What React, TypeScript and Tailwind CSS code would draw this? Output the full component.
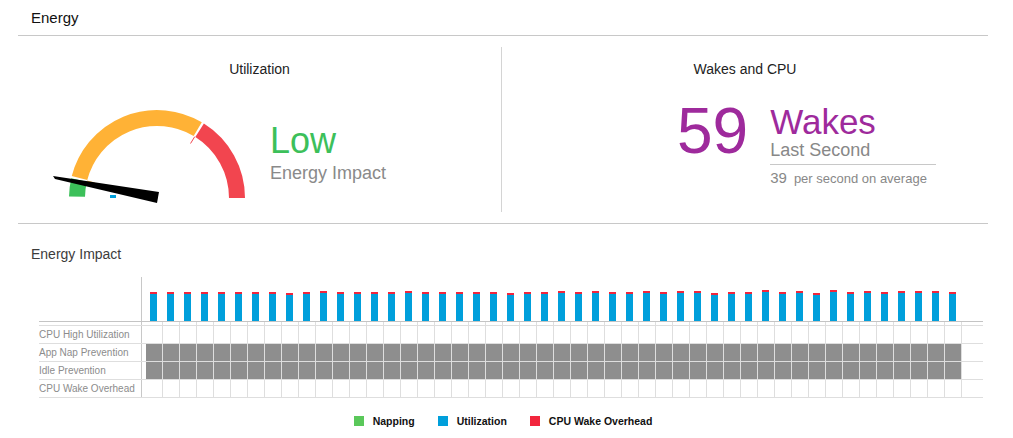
import React from 'react';

// bar levels read off the chart: N normal, L low, H high, X highest
const levels = 'NNNNNNNNLNHNNNNHNNNNNLNNHNHNNHNHHLNNXNHLXNHNHHHN'.split('');

const blueHeight: Record<string, string> = {
  L: 'h-[26px]',
  N: 'h-[27px]',
  H: 'h-[28px]',
  X: 'h-[29px]',
};

const rows = [
  { label: 'CPU High Utilization', filled: false },
  { label: 'App Nap Prevention', filled: true },
  { label: 'Idle Prevention', filled: true },
  { label: 'CPU Wake Overhead', filled: false },
];

const cx = 117;
const cy = 98;

const pt = (deg: number, r: number) => {
  const a = (deg * Math.PI) / 180;
  return [cx + r * Math.cos(a), cy - r * Math.sin(a)];
};

const arc = (from: number, to: number, r: number) => {
  const [x1, y1] = pt(to, r);
  const [x2, y2] = pt(from, r);
  const large = to - from > 180 ? 1 : 0;
  return `M ${x1} ${y1} A ${r} ${r} 0 ${large} 1 ${x2} ${y2}`;
};

const tick = (deg: number) => {
  const [x1, y1] = pt(deg, 72);
  const [x2, y2] = pt(deg, 64);
  return `M ${x1} ${y1} L ${x2} ${y2}`;
};

const Gauge = () => (
  <svg width="210" height="105" viewBox="0 0 210 105">
    <path d={arc(0, 57.8, 80)} stroke="#f2454f" strokeWidth="16" fill="none" />
    <path d={arc(59.4, 165.6, 80)} stroke="#ffb236" strokeWidth="16" fill="none" />
    <path d={arc(167, 179, 80)} stroke="#3cc05a" strokeWidth="16" fill="none" />
    <path d={tick(58.4)} stroke="#f2454f" strokeWidth="1" />
    <path d={tick(166.4)} stroke="#ffb236" strokeWidth="1" />
    <rect x="70" y="95" width="6" height="3" fill="#009fdb" />
    <polygon points="13,76 15,79 117,103 119,92" fill="#000" />
  </svg>
);

const Cells = ({ filled, h }: { filled: boolean; h: string }) => (
  <div className={`flex border-l border-[#c8c8c8] pl-[4px] ${h}`}>
    {levels.map((_, i) => (
      <div
        key={i}
        className={`w-[17px] border-r border-[#dedede] ${filled ? 'bg-[#8e8e8e]' : ''}`}
      />
    ))}
  </div>
);

export default function App() {
  return (
    <div className="w-[1013px] h-[438px] bg-white font-['Liberation_Sans',Arial,sans-serif] overflow-hidden">
      <div className="mx-[18px] w-[970px]">
        {/* header */}
        <div className="h-[36px] border-b border-[#c8c8c8] pl-[13px] flex items-center">
          <span className="text-[15px] leading-none text-[#111]">Energy</span>
        </div>

        {/* top panel */}
        <div className="flex py-[11px] border-b border-[#c8c8c8]">
          <div className="w-[484px] h-[165px] border-r border-[#d4d4d4] flex flex-col pt-[14px]">
            <div className="text-[14px] leading-[16px] text-center text-[#222]">Utilization</div>
            <div className="flex mt-[23px] pl-[22px]">
              <Gauge />
              <div className="ml-[20px] mt-[23px] flex flex-col">
                <span className="text-[36px] leading-none text-[#3cc05a]">Low</span>
                <span className="text-[18px] leading-none text-[#8a8a8a] mt-[5px]">Energy Impact</span>
              </div>
            </div>
          </div>
          <div className="flex-1 h-[165px] flex flex-col pt-[14px]">
            <div className="text-[14px] leading-[16px] text-center text-[#222]">Wakes and CPU</div>
            <div className="flex mt-[22px] pl-[175px]">
              <span className="text-[64px] leading-none text-[#9e2a9c]">59</span>
              <div className="ml-[22px] mt-[5px] flex flex-col">
                <span className="text-[35px] leading-none text-[#9e2a9c]">Wakes</span>
                <span className="text-[18px] leading-none text-[#888] mt-[2px]">Last Second</span>
                <div className="w-[166px] mt-[5px] border-t border-[#c8c8c8]" />
                <div className="flex items-baseline mt-[5px] text-[#888]">
                  <span className="text-[15px] leading-none">39</span>
                  <span className="text-[13px] leading-none ml-[7px]">per second on average</span>
                </div>
              </div>
            </div>
          </div>
        </div>

        {/* energy impact chart */}
        <div className="pt-[23px]">
          <div className="pl-[13px] text-[14px] leading-none text-[#3c3c3c]">Energy Impact</div>
          <div className="ml-[21px] w-[944px] mt-[16px]">
            <div className="flex border-b border-[#c4c4c4]">
              <div className="w-[102px]" />
              <div className="flex h-[44px] border-l border-[#c8c8c8] pl-[4px]">
                {levels.map((lv, i) => (
                  <div key={i} className="w-[17px] pl-[4px] flex flex-col justify-end">
                    <div className="w-[7px] h-[2px] bg-[#f2263d]" />
                    <div className={`w-[7px] bg-[#009fdb] ${blueHeight[lv]}`} />
                  </div>
                ))}
              </div>
            </div>
            <div className="flex">
              <div className="w-[102px]" />
              <Cells filled={false} h="h-[3px]" />
            </div>
            <div className="border-b border-[#dedede]">
              {rows.map((r) => (
                <div key={r.label} className="flex h-[18px] border-t border-[#dedede]">
                  <div className="w-[102px] text-[10px] leading-none text-[#8c8c8c] flex items-center">
                    {r.label}
                  </div>
                  <Cells filled={r.filled} h="h-[17px]" />
                </div>
              ))}
            </div>
          </div>

          {/* legend */}
          <div className="flex justify-center items-center h-[12px] mt-[17px] text-[10.5px] font-bold text-[#111]">
            <div className="w-[10px] h-[10px] bg-[#5ac85a]" />
            <span className="ml-[9px] leading-none">Napping</span>
            <div className="w-[10px] h-[10px] bg-[#009fdb] ml-[23px]" />
            <span className="ml-[9px] leading-none">Utilization</span>
            <div className="w-[10px] h-[10px] bg-[#f2263d] ml-[23px]" />
            <span className="ml-[9px] leading-none">CPU Wake Overhead</span>
          </div>
        </div>
      </div>
    </div>
  );
}
